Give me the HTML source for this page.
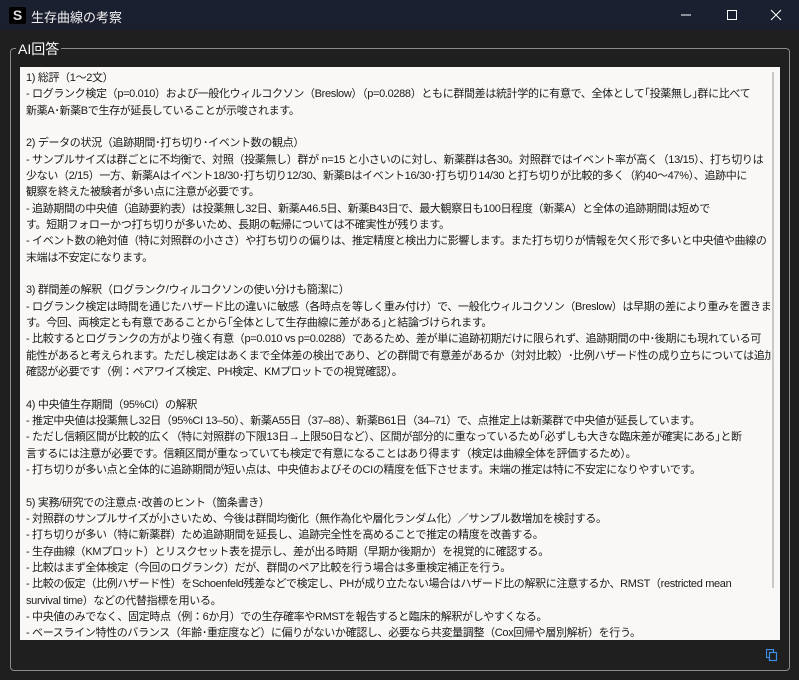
<!DOCTYPE html>
<html><head><meta charset="utf-8"><style>
body{margin:0;width:799px;height:680px;background:#1f1f1f;overflow:hidden;font-family:"Liberation Sans","Noto Sans CJK JP",sans-serif;position:relative}
.tb{position:absolute;left:0;top:0;width:799px;height:30px;background:#1b2030;color:#fff}
.logo{position:absolute;left:9px;top:7px;width:17px;height:17px;background:#000;border-radius:2px;color:#ddd;font-weight:bold;font-size:14px;text-align:center;line-height:17px}
.ttl{position:absolute;left:31px;top:7px;font-size:13px;color:#f0f0f0}
.gb{position:absolute;left:10px;top:48px;width:778px;height:621px;border:1px solid #8a8a8a;border-radius:4px}
.gl{position:absolute;left:16px;top:39px;background:#1f1f1f;color:#fff;font-size:14px;padding:0 2px}
.ta{position:absolute;left:20px;top:67px;width:760px;height:573px;background:#f9f8f6}
.sb{position:absolute;left:772px;top:72px;width:2px;height:516px;background:#c8c8c8}
.tx{position:absolute;left:26px;top:70px;width:745px;overflow:hidden;font-size:11px;letter-spacing:-0.34px;line-height:16.33px;color:#1a1a1a;white-space:nowrap}
</style></head><body>
<div class="tb"><div class="logo">S</div><div class="ttl">生存曲線の考察</div>
<svg style="position:absolute;left:680px;top:8px" width="110" height="14"><line x1="1" y1="7" x2="11" y2="7" stroke="#fff" stroke-width="1"/><rect x="47.5" y="2.5" width="9" height="9" fill="none" stroke="#fff"/><path d="M91 2L101 12M101 2L91 12" stroke="#fff"/></svg></div>
<div class="gb"></div><div class="gl">AI回答</div>
<div class="ta"></div><div class="sb"></div>
<div class="tx">1) 総評（1〜2文）<br>- ログランク検定（p=0.010）および一般化ウィルコクソン（Breslow）（p=0.0288）ともに群間差は統計学的に有意で、全体として｢投薬無し｣群に比べて<br>新薬A･新薬Bで生存が延長していることが示唆されます。<br><br>2) データの状況（追跡期間･打ち切り･イベント数の観点）<br>- サンプルサイズは群ごとに不均衡で、対照（投薬無し）群が n=15 と小さいのに対し、新薬群は各30。対照群ではイベント率が高く（13/15）、打ち切りは<br>少ない（2/15）一方、新薬Aはイベント18/30･打ち切り12/30、新薬Bはイベント16/30･打ち切り14/30 と打ち切りが比較的多く（約40〜47%）、追跡中に<br>観察を終えた被験者が多い点に注意が必要です。<br>- 追跡期間の中央値（追跡要約表）は投薬無し32日、新薬A46.5日、新薬B43日で、最大観察日も100日程度（新薬A）と全体の追跡期間は短めで<br>す。短期フォローかつ打ち切りが多いため、長期の転帰については不確実性が残ります。<br>- イベント数の絶対値（特に対照群の小ささ）や打ち切りの偏りは、推定精度と検出力に影響します。また打ち切りが情報を欠く形で多いと中央値や曲線の<br>末端は不安定になります。<br><br>3) 群間差の解釈（ログランク/ウィルコクソンの使い分けも簡潔に）<br>- ログランク検定は時間を通じたハザード比の違いに敏感（各時点を等しく重み付け）で、一般化ウィルコクソン（Breslow）は早期の差により重みを置きま<br>す。今回、両検定とも有意であることから｢全体として生存曲線に差がある｣と結論づけられます。<br>- 比較するとログランクの方がより強く有意（p=0.010 vs p=0.0288）であるため、差が単に追跡初期だけに限られず、追跡期間の中･後期にも現れている可<br>能性があると考えられます。ただし検定はあくまで全体差の検出であり、どの群間で有意差があるか（対対比較）･比例ハザード性の成り立ちについては追加<br>確認が必要です（例：ペアワイズ検定、PH検定、KMプロットでの視覚確認）。<br><br>4) 中央値生存期間（95%CI）の解釈<br>- 推定中央値は投薬無し32日（95%CI 13–50）、新薬A55日（37–88）、新薬B61日（34–71）で、点推定上は新薬群で中央値が延長しています。<br>- ただし信頼区間が比較的広く（特に対照群の下限13日→上限50日など）、区間が部分的に重なっているため｢必ずしも大きな臨床差が確実にある｣と断<br>言するには注意が必要です。信頼区間が重なっていても検定で有意になることはあり得ます（検定は曲線全体を評価するため）。<br>- 打ち切りが多い点と全体的に追跡期間が短い点は、中央値およびそのCIの精度を低下させます。末端の推定は特に不安定になりやすいです。<br><br>5) 実務/研究での注意点･改善のヒント（箇条書き）<br>- 対照群のサンプルサイズが小さいため、今後は群間均衡化（無作為化や層化ランダム化）／サンプル数増加を検討する。<br>- 打ち切りが多い（特に新薬群）ため追跡期間を延長し、追跡完全性を高めることで推定の精度を改善する。<br>- 生存曲線（KMプロット）とリスクセット表を提示し、差が出る時期（早期か後期か）を視覚的に確認する。<br>- 比較はまず全体検定（今回のログランク）だが、群間のペア比較を行う場合は多重検定補正を行う。<br>- 比較の仮定（比例ハザード性）をSchoenfeld残差などで検定し、PHが成り立たない場合はハザード比の解釈に注意するか、RMST（restricted mean<br>survival time）などの代替指標を用いる。<br>- 中央値のみでなく、固定時点（例：6か月）での生存確率やRMSTを報告すると臨床的解釈がしやすくなる。<br>- ベースライン特性のバランス（年齢･重症度など）に偏りがないか確認し、必要なら共変量調整（Cox回帰や層別解析）を行う。</div>
<svg style="position:absolute;left:766px;top:649px" width="12" height="13"><rect x="0.5" y="0.5" width="7" height="8" fill="none" stroke="#3a8ee6" stroke-width="1.2"/><rect x="3.5" y="3.5" width="7" height="8" fill="#1f1f1f" stroke="#3a8ee6" stroke-width="1.2"/></svg>
</body></html>
